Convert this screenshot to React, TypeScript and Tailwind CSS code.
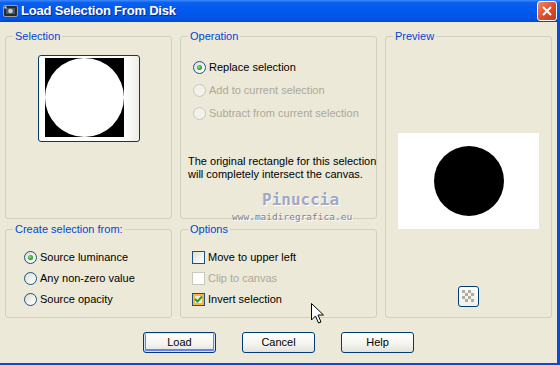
import type { ReactNode } from 'react'

const font = { fontFamily: '"Liberation Sans", Arial, sans-serif' }

function Radio({ checked, disabled }: { checked?: boolean; disabled?: boolean }) {
  return (
    <span
      className={`relative flex h-[13px] w-[13px] shrink-0 items-center justify-center rounded-full border ${
        disabled
          ? 'border-[#CAC8BB] bg-[#F2F1EA]'
          : 'border-[#1C5180] bg-[linear-gradient(135deg,#DCDBD3_0%,#F4F4F0_60%,#FFFFFF_100%)]'
      }`}
    >
      {checked && (
        <span className="h-[5px] w-[5px] rounded-full bg-[radial-gradient(circle_at_40%_40%,#8FE08F_0%,#21A121_60%,#1A8A1A_100%)]" />
      )}
    </span>
  )
}

function Check({ checked, disabled, hover }: { checked?: boolean; disabled?: boolean; hover?: boolean }) {
  return (
    <span
      className={`relative flex h-[13px] w-[13px] shrink-0 items-center justify-center border ${
        disabled
          ? 'border-[#CAC8BB] bg-white'
          : 'border-[#1C5180] bg-[linear-gradient(135deg,#DCDBD3_0%,#F4F4F0_60%,#FFFFFF_100%)]'
      }`}
    >
      {hover && <span className="absolute inset-0 border-2 border-[#F8B636]" />}
      {checked && (
        <svg width="9" height="9" viewBox="0 0 9 9" className="relative">
          <path d="M1 4 L3.5 6.5 L8 1.5" fill="none" stroke="#21A121" strokeWidth="2" />
        </svg>
      )}
    </span>
  )
}

function Group({ label, className, children }: { label: string; className?: string; children?: ReactNode }) {
  return (
    <fieldset className={`rounded-[3px] border border-[#D0D0BF] ${className ?? ''}`}>
      <legend className="ml-[7px] px-[2px] text-[11px] leading-[13px] text-[#0046D5]">{label}</legend>
      {children}
    </fieldset>
  )
}

function Row({ children, muted }: { children: ReactNode; muted?: boolean }) {
  return (
    <div className={`flex h-[13px] items-center gap-[3px] whitespace-nowrap text-[11px] leading-[13px] ${muted ? 'text-[#ACA899]' : 'text-black'}`}>
      {children}
    </div>
  )
}

function XPButton({ label, primary }: { label: string; primary?: boolean }) {
  return (
    <button
      className={`flex h-[21px] w-[73px] items-center justify-center rounded-[3px] border border-[#003C74] bg-[linear-gradient(180deg,#FFFFFF_0%,#F4F3EE_60%,#E3E1D9_100%)] text-[11px] text-black ${
        primary ? 'shadow-[inset_0_0_0_1px_#CEE7FF,inset_0_-1px_0_2px_#6982EE]' : ''
      }`}
    >
      {label}
    </button>
  )
}

export default function App() {
  return (
    <div style={font} className="relative flex h-[365px] w-[560px] flex-col overflow-hidden bg-[#ECE9D8]">
      {/* title bar */}
      <div className="flex h-[22px] shrink-0 items-center bg-[linear-gradient(180deg,#3D8BFF_0%,#0A5FEE_12%,#0058EE_50%,#0055E5_85%,#0046CC_100%)] pl-[3px] pr-[3px]">
        <svg width="15" height="14" viewBox="0 0 15 14">
          <rect x="0.5" y="1.5" width="14" height="11" rx="1.5" fill="#2A2A2A" stroke="#9AA0A8" />
          <rect x="3" y="4" width="9" height="6" fill="#4D5866" />
          <circle cx="7.5" cy="7" r="2.3" fill="#C9CED6" />
          <rect x="1.5" y="2.5" width="2" height="2" fill="#E0E3E8" />
        </svg>
        <span className="ml-[3px] flex-1 text-[13px] font-bold tracking-[-0.2px] text-white [text-shadow:1px_1px_0_#0A2A8A]">
          Load Selection From Disk
        </span>
        <div className="flex h-[20px] w-[20px] items-center justify-center rounded-[3px] border border-white bg-[linear-gradient(135deg,#EC8C6C_0%,#E0502E_50%,#C23A17_100%)]">
          <svg width="10" height="10" viewBox="0 0 10 10">
            <path d="M1 1 L9 9 M9 1 L1 9" stroke="white" strokeWidth="2" />
          </svg>
        </div>
      </div>

      {/* body */}
      <div className="flex flex-1 flex-col border-b-2 border-r-[3px] border-[#0A4BD8] px-[5px] pt-[8px]">
        <div className="grid grid-cols-[167px_197px_167px] grid-rows-[189px_95px] gap-x-[8px] gap-y-[4px]">
          <Group label="Selection" className="flex flex-col items-center">
            <div className="ml-[1px] mt-[12px] flex h-[87px] w-[102px] rounded-[3px] border border-[#003C74] bg-[linear-gradient(90deg,#FFFFFF_0%,#FFFFFF_86%,#EEECE5_100%)] pl-[6px] pt-[2px]">
              <div className="h-[79px] w-[79px] overflow-hidden bg-black">
                <div className="h-full w-full rounded-full bg-white" />
              </div>
            </div>
          </Group>

          <Group label="Operation" className="relative">
            <div className="ml-[12px] mt-[18px] flex flex-col gap-[10px]">
              <Row>
                <Radio checked />
                Replace selection
              </Row>
              <Row muted>
                <Radio disabled />
                Add to current selection
              </Row>
              <Row muted>
                <Radio disabled />
                Subtract from current selection
              </Row>
            </div>
            <p className="ml-[7px] mt-[35px] whitespace-nowrap text-[11px] leading-[13px] text-black">
              The original rectangle for this selection
              <br />
              will completely intersect the canvas.
            </p>
            <span
              style={{ fontFamily: '"DejaVu Sans Mono", monospace' }}
              className="absolute left-[81px] top-[148px] text-[16px] font-bold leading-[18px] text-[#A3A7C6] [text-shadow:1px_1px_0_#FFFFFF]"
            >
              Pinuccia
            </span>
            <span
              style={{ fontFamily: '"DejaVu Sans Mono", monospace' }}
              className="absolute left-[51px] top-[168px] text-[9.5px] leading-[11px] text-[#7F7F99] [text-shadow:1px_1px_0_#FFFFFF]"
            >
              www.maidiregrafica.eu
            </span>
          </Group>

          <Group label="Preview" className="row-span-2 flex flex-col items-center">
            <div className="mt-[90px] flex h-[96px] w-[141px] items-center justify-center bg-white">
              <div className="h-[70px] w-[70px] rounded-full bg-black" />
            </div>
            <div className="mt-[57px] flex h-[21px] w-[21px] items-center justify-center rounded-[3px] border border-[#003C74] bg-[linear-gradient(180deg,#FFFFFF_0%,#F1F0EA_100%)]">
              <svg width="13" height="13" viewBox="0 0 13 13">
                <rect width="13" height="13" fill="#F4F3EE" />
                <rect x="0" y="0" width="3" height="3" fill="#B0ADA0" />
                <rect x="6" y="0" width="3" height="3" fill="#B0ADA0" />
                <rect x="3" y="3" width="3" height="3" fill="#B0ADA0" />
                <rect x="9" y="3" width="3" height="3" fill="#B0ADA0" />
                <rect x="0" y="6" width="3" height="3" fill="#B0ADA0" />
                <rect x="6" y="6" width="3" height="3" fill="#B0ADA0" />
                <rect x="3" y="9" width="3" height="3" fill="#B0ADA0" />
                <rect x="9" y="9" width="3" height="3" fill="#B0ADA0" />
              </svg>
            </div>
          </Group>

          <Group label="Create selection from:">
            <div className="ml-[18px] mt-[15px] flex flex-col gap-[8px]">
              <Row>
                <Radio checked />
                Source luminance
              </Row>
              <Row>
                <Radio />
                Any non-zero value
              </Row>
              <Row>
                <Radio />
                Source opacity
              </Row>
            </div>
          </Group>

          <Group label="Options">
            <div className="ml-[11px] mt-[15px] flex flex-col gap-[8px]">
              <Row>
                <Check />
                Move to upper left
              </Row>
              <Row muted>
                <Check disabled />
                Clip to canvas
              </Row>
              <Row>
                <Check checked hover />
                Invert selection
              </Row>
            </div>
          </Group>
        </div>

        <div className="mt-[14px] flex justify-center gap-[26px]">
          <XPButton label="Load" primary />
          <XPButton label="Cancel" />
          <XPButton label="Help" />
        </div>
      </div>

      {/* mouse pointer */}
      <svg className="absolute left-[311px] top-[303px]" width="14" height="23" viewBox="0 0 14 23">
        <path d="M0.5 0.5 L0.5 17 L4.5 13 L7.5 20 L10 19 L7 12 L12.5 12 Z" fill="white" stroke="black" strokeWidth="1" />
      </svg>
    </div>
  )
}
